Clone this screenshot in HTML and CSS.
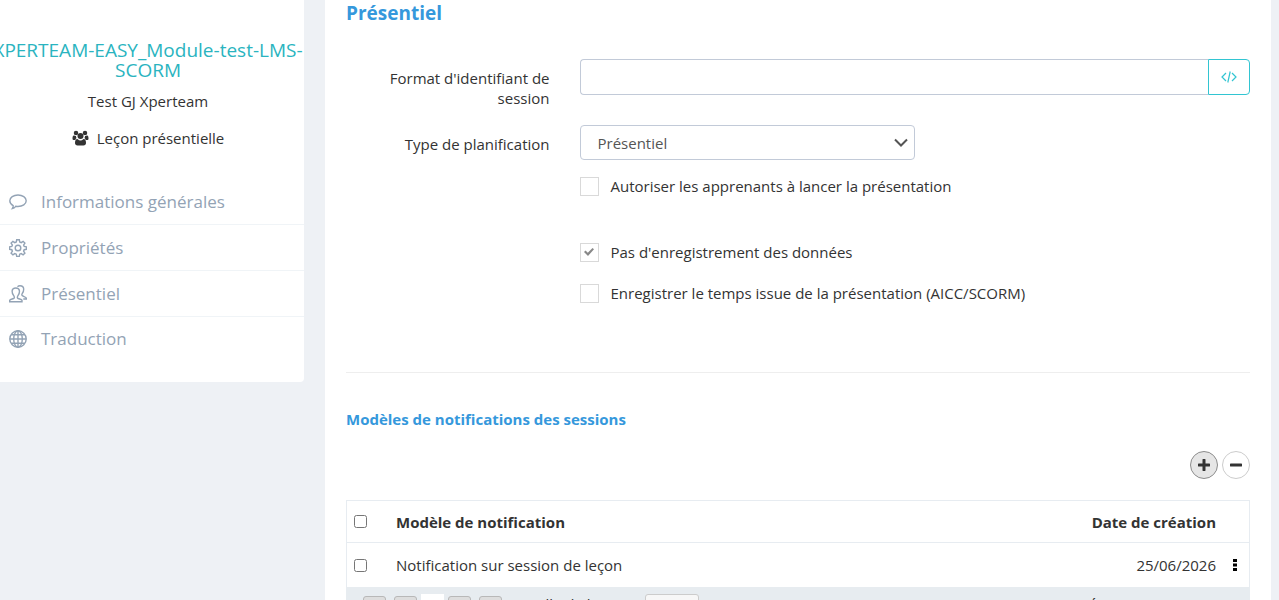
FILE: index.html
```
<!DOCTYPE html>
<html lang="fr">
<head>
    <meta charset="UTF-8">
    <meta name="viewport" content="width=device-width, initial-scale=1.0">
    <title>Leçon présentielle</title>
    <link rel="stylesheet" href="styles.css">
</head>
<body>
    <div class="page">
        <!-- Sidebar -->
        <aside class="sidebar">
            <div class="profile">
                <h1 class="profile-title">XPERTEAM-EASY_Module-test-LMS-SCORM</h1>
                <div class="profile-name">Test GJ Xperteam</div>
                <div class="profile-type">
                    <svg width="17" height="16" viewBox="0 0 34 32" fill="currentColor">
                        <circle cx="8" cy="6" r="4.5"/>
                        <circle cx="26" cy="6" r="4.5"/>
                        <path d="M9 16c-1-2-1-3-1-4-2 0-3-1-4.500-1C2 11 1 13 1 17c0 2 1 3 3 3h3c0-2 1-3 2-4z"/>
                        <path d="M25 16c1-2 1-3 1-4 2 0 3-1 4.500-1 1.500 0 2.500 2 2.500 6 0 2-1 3-3 3h-3c0-2-1-3-2-4z"/>
                        <circle cx="17" cy="12" r="6"/>
                        <path d="M11 18c-4 0-5 4-5 8 0 3 2 5 5 5h12c3 0 5-2 5-5 0-4-1-8-5-8-2 2-4 3-6 3s-4-1-6-3z"/>
                    </svg>
                    <span>Leçon présentielle</span>
                </div>
            </div>
            <nav class="menu">
                <a href="#infos">
                    <svg width="18" height="18" viewBox="0 0 18 18">
                        <path d="M9 2c4.500 0 8.200 2.400 8.200 5.800S13.500 13.500 9 13.500c-.8 0-1.600-.1-2.300-.2C5.700 14.800 4.600 15.500 3.300 15.600c.8-.9 1-1.800.9-2.900C2 11.500.8 9.800.8 7.800.8 4.400 4.500 2 9 2z"/>
                    </svg>
                    Informations générales
                </a>
                <a href="#proprietes">
                    <svg width="18" height="18" viewBox="0 0 18 18">
                        <path d="M7.700.8h2.600l.4 2.200 1.500.6 1.900-1.300 1.800 1.800-1.300 1.900.6 1.500 2.200.4v2.400l-2.200.4-.6 1.500 1.300 1.900-1.800 1.800-1.900-1.300-1.500.6-.4 2.200H7.700l-.4-2.200-1.500-.6-1.900 1.300-1.800-1.800 1.300-1.900-.6-1.500-2.200-.4V7.900l2.200-.4.6-1.500-1.300-1.900 1.800-1.800 1.900 1.300L7.300 3z"/>
                        <circle cx="9" cy="9" r="2.800"/>
                    </svg>
                    Propriétés
                </a>
                <a href="#presentiel">
                    <svg width="18" height="18" viewBox="0 0 18 18">
                        <path d="M.7 16.800v-1.500c.6-1.200 3.800-1.300 4.500-2.300.4-.6.200-1.300-.2-1.900C3.300 9 3 7.400 3.100 6c.2-2 1.700-3 3.700-3s3.500 1 3.700 3c.1 1.400-.2 3-1.800 5.100-.4.600-.6 1.300-.2 1.900.7 1 4 1.100 4.500 2.300v1.500z"/>
                        <path d="M8.500 1.700C9.200 1 10 .8 11 .8c2.200 0 3.600 1.300 3.700 3.200.1 1.500-.2 3-1.600 4.800-.4.600-.4 1.200 0 1.700.8 1 3.600 1.200 4.200 2.500V14h-3"/>
                    </svg>
                    Présentiel
                </a>
                <a href="#traduction">
                    <svg width="18" height="18" viewBox="0 0 18 18">
                        <circle cx="9" cy="9" r="8.200"/>
                        <ellipse cx="9" cy="9" rx="4.300" ry="8.200"/>
                        <path d="M9 .8v16.400M.8 9h16.400M2.200 4.800h13.600M2.200 13.200h13.600"/>
                    </svg>
                    Traduction
                </a>
            </nav>
        </aside>

        <!-- Content -->
        <main class="content">
            <h2 class="content-title">Présentiel</h2>

            <form class="form">
                <div class="form-row">
                    <label class="form-label" for="session-format">Format d'identifiant de session</label>
                    <div class="form-field input-group">
                        <input type="text" id="session-format">
                        <button type="button" class="code-btn" aria-label="Insérer une variable">
                            <svg width="16" height="12" viewBox="0 0 16 12">
                                <path d="M5 2L1 6l4 4M11 2l4 4-4 4M9.200.5L6.800 11.500"/>
                            </svg>
                        </button>
                    </div>
                </div>
                <div class="form-row">
                    <label class="form-label" for="planning-type">Type de planification</label>
                    <div class="form-field">
                        <div class="select-wrap">
                            <select id="planning-type">
                                <option>Présentiel</option>
                            </select>
                            <svg width="14" height="10" viewBox="0 0 14 10">
                                <path d="M1 1.500l6 6 6-6"/>
                            </svg>
                        </div>
                    </div>
                </div>
                <div class="form-row checks">
                    <div class="form-field">
                        <label class="check check-first"><input type="checkbox">Autoriser les apprenants à lancer la présentation</label>
                        <label class="check"><input type="checkbox" checked>Pas d'enregistrement des données</label>
                        <label class="check"><input type="checkbox">Enregistrer le temps issue de la présentation (AICC/SCORM)</label>
                    </div>
                </div>
            </form>

            <hr>

            <!-- Notification templates -->
            <section class="templates">
                <h3>Modèles de notifications des sessions</h3>
                <div class="toolbar">
                    <button type="button" class="round-btn active" aria-label="Ajouter">
                        <svg width="12" height="12" viewBox="0 0 12 12"><path d="M6 1v10M1 6h10"/></svg>
                    </button>
                    <button type="button" class="round-btn" aria-label="Supprimer">
                        <svg width="12" height="12" viewBox="0 0 12 12"><path d="M1 6h10"/></svg>
                    </button>
                </div>
                <table class="grid">
                    <thead>
                        <tr>
                            <th class="col-check"><input type="checkbox" aria-label="Tout sélectionner"></th>
                            <th>Modèle de notification</th>
                            <th class="col-date">Date de création</th>
                            <th class="col-menu"></th>
                        </tr>
                    </thead>
                    <tbody>
                        <tr>
                            <td class="col-check"><input type="checkbox" aria-label="Sélectionner"></td>
                            <td>Notification sur session de leçon</td>
                            <td class="col-date">25/06/2026</td>
                            <td class="col-menu">
                                <button type="button" class="dots" aria-label="Actions">
                                    <svg width="4" height="12" viewBox="0 0 4 12"><path d="M0 0h4v3H0zM0 4.500h4v3H0zM0 9h4v3H0z"/></svg>
                                </button>
                            </td>
                        </tr>
                    </tbody>
                </table>
                <div class="pager">
                    <div class="pager-group">
                        <button type="button" class="page-btn" aria-label="Première page"></button>
                        <button type="button" class="page-btn" aria-label="Page précédente"></button>
                    </div>
                    <a href="#page1" class="page-current">1</a>
                    <div class="pager-group">
                        <button type="button" class="page-btn" aria-label="Page suivante"></button>
                        <button type="button" class="page-btn" aria-label="Dernière page"></button>
                    </div>
                    <div class="page-size">
                        <label for="page-size">Taille de la page:</label>
                        <input type="text" id="page-size" value="10">
                    </div>
                    <span class="page-info">Éléments 1 à 1 sur 1.</span>
                </div>
            </section>
        </main>
    </div>
</body>
</html>
```
FILE: styles.css
```
* {
    box-sizing: border-box;
}
body {
    margin: 0;
    height: 100vh;
    overflow: hidden;
    font-family: "Open Sans", sans-serif;
    font-size: 15px;
    line-height: 20px;
    color: #333;
    background-color: #eef1f5;
}
h1, h2, h3 {
    margin: 0;
}
button {
    padding: 0;
    cursor: pointer;
}
svg {
    display: block;
    flex: none;
}
.page {
    display: flex;
    align-items: flex-start;
    gap: 21px;
    padding-right: 8px;
}

/* Sidebar */
.sidebar {
    flex: none;
    width: 312px;
    margin-left: -8px;
    padding: 40px 0 21px;
    background: #fff;
    border-radius: 0 0 4px 4px;
}
.profile {
    text-align: center;
}
.profile-title {
    font-size: 19px;
    font-weight: 400;
    line-height: 20px;
    color: #2ab4c0;
}
.profile-name {
    margin-top: 11px;
}
.profile-type {
    display: flex;
    justify-content: center;
    align-items: center;
    gap: 8px;
    margin-top: 17px;
}
.menu {
    margin-top: 31px;
}
.menu a {
    display: flex;
    align-items: center;
    gap: 14px;
    height: 46px;
    padding-left: 17px;
    border-bottom: 1px solid #f0f4f7;
    font-size: 17px;
    color: #93a3b5;
    text-decoration: none;
}
.menu a:last-child {
    height: 44px;
    border-bottom: none;
}
.menu svg {
    fill: none;
    stroke: currentColor;
    stroke-width: 1.4;
}

/* Content */
.content {
    flex: 1;
    min-width: 0;
    padding: 0 21px 20px;
    background: #fff;
}
.content-title {
    padding-top: 3px;
    font-size: 19px;
    color: #3598dc;
}
.form {
    margin: 36px -15px 0;
}
.form-row {
    display: flex;
    margin-bottom: 16px;
}
.form-label {
    width: 25%;
    padding: 9px 15px 1px;
    text-align: right;
}
.form-field {
    width: 75%;
    padding: 0 15px;
}
.input-group {
    display: flex;
}
.input-group input {
    flex: 1;
    height: 36px;
    border: 1px solid #c2cad8;
    border-right: none;
    border-radius: 4px 0 0 4px;
    padding: 6px 12px;
    font: inherit;
}
.code-btn {
    display: flex;
    align-items: center;
    justify-content: center;
    width: 42px;
    height: 36px;
    border: 1px solid #32c5d2;
    border-radius: 0 4px 4px 0;
    background: #fff;
}
.code-btn svg {
    fill: none;
    stroke: #32c5d2;
    stroke-width: 1.2;
}
.select-wrap {
    position: relative;
    width: 50%;
}
.select-wrap select {
    display: block;
    width: 100%;
    height: 35px;
    padding: 0 17px;
    border: 1px solid #c2cad8;
    border-radius: 4px;
    appearance: none;
    background: #fff;
    font: inherit;
    color: #555;
}
.select-wrap svg {
    position: absolute;
    top: 13px;
    right: 7px;
    fill: none;
    stroke: #555;
    stroke-width: 2;
    pointer-events: none;
}
.checks {
    justify-content: flex-end;
    margin-bottom: 0;
}
.check {
    display: flex;
    align-items: center;
    gap: 12px;
    margin-bottom: 21px;
}
.check-first {
    margin-bottom: 46px;
}
.check input {
    display: grid;
    place-items: center;
    width: 19px;
    height: 19px;
    margin: 0;
    border: 1px solid #d9d9d9;
    appearance: none;
    background: #fff;
}
.check input:checked::before {
    content: "";
    width: 10px;
    height: 8px;
    background: #888;
    clip-path: polygon(0 50%, 15% 32%, 38% 60%, 85% 0, 100% 16%, 40% 100%);
}
hr {
    margin: 48px 0 36px;
    border: 0;
    border-top: 1px solid #eee;
}
.templates h3 {
    font-size: 15px;
    color: #3598dc;
}
.toolbar {
    display: flex;
    justify-content: flex-end;
    gap: 4px;
    margin: 22px 0 21px;
}
.round-btn {
    display: flex;
    align-items: center;
    justify-content: center;
    width: 28px;
    height: 28px;
    border: 1px solid #ccc;
    border-radius: 50%;
    background: #fff;
}
.round-btn.active {
    border-color: #8c8c8c;
    background: #e6e6e6;
}
.round-btn svg {
    fill: none;
    stroke: #333;
    stroke-width: 3;
    stroke-linecap: round;
}

/* Table */
.grid {
    width: 100%;
    border: 1px solid #e7ecf1;
    border-bottom: none;
    border-collapse: separate;
    border-spacing: 0;
}
.grid th, .grid td {
    height: 44px;
    padding: 0 7px;
    text-align: left;
}
.grid th {
    height: 42px;
    border-bottom: 1px solid #e7ecf1;
}
.grid .col-check {
    width: 42px;
}
.grid .col-check input {
    display: block;
    width: 13px;
    height: 13px;
    margin: 0;
}
.grid .col-date {
    text-align: right;
}
.grid .col-menu {
    width: 26px;
    padding: 0 12px 0 10px;
}
.dots {
    display: block;
    border: none;
    background: none;
}

/* Pager */
.pager {
    display: flex;
    align-items: flex-start;
    gap: 4px;
    padding: 7px 17px;
    background: #e7ecf0;
}
.pager-group {
    display: flex;
    gap: 8px;
    padding-top: 2px;
}
.page-btn {
    width: 23px;
    height: 23px;
    border: 1px solid #b8b8b8;
    border-radius: 3px;
    background: #ddd;
}
.page-current {
    width: 23px;
    height: 28px;
    padding-top: 4px;
    background: #fff;
    color: #333;
    text-align: center;
    text-decoration: none;
}
.page-size {
    display: flex;
    align-items: flex-start;
    gap: 4px;
    margin-left: 19px;
}
.page-size input {
    width: 54px;
    height: 28px;
    padding: 0 6px;
    border: 1px solid #ccc;
    border-radius: 3px;
    background: #f7f7f7;
    font: inherit;
}
.page-info {
    margin: 2px 0 0 auto;
}
```
